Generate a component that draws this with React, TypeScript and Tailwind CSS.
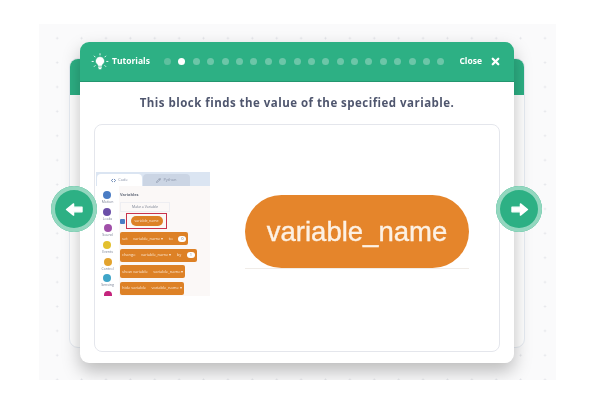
import { X, Code, Pencil } from 'lucide-react'

const categories = [
  { name: 'Motion', color: 'bg-[#4a7cc4]' },
  { name: 'Looks', color: 'bg-[#6b4fa8]' },
  { name: 'Sound', color: 'bg-[#a04fa8]' },
  { name: 'Events', color: 'bg-[#e3c02e]' },
  { name: 'Control', color: 'bg-[#e3a32e]' },
  { name: 'Sensing', color: 'bg-[#3fa5c8]' },
  { name: '', color: 'bg-[#c4237c]' },
]

const dots = Array.from({ length: 20 }, (_, i) => i)

function Block({ children }: { children: React.ReactNode }) {
  return (
    <div className="relative mb-[3.5px] flex h-[13px] w-fit items-center gap-[5.5px] rounded-[2px] bg-[#dd8126] px-[2px] text-[4px] text-[#fbe6d0]">
      {children}
    </div>
  )
}

function ScreenshotThumb() {
  return (
    <div className="flex h-[124px] w-[114px] shrink-0 flex-col overflow-hidden blur-[0.4px]">
      <div className="flex h-[14px] shrink-0 items-end bg-[#dbe5f2] pl-[1px]">
        <div className="flex h-[12px] w-[45px] items-center justify-center gap-[2px] rounded-t-[4px] bg-white text-[4px] text-[#8a93a8]">
          <Code className="h-[5px] w-[5px] text-[#4a6fa5]" strokeWidth={4} />
          Code
        </div>
        <div className="ml-[1px] flex h-[12px] w-[47px] items-center justify-center gap-[2px] rounded-t-[4px] bg-[#cbd5e4] text-[4px] text-[#8a93a8]">
          <Pencil className="h-[5px] w-[5px]" strokeWidth={3} />
          Python
        </div>
      </div>
      <div className="flex min-h-0 flex-1 bg-white">
        <div className="flex w-[23px] shrink-0 flex-col items-center gap-[3.7px] pt-[5px]">
          {categories.map(c => (
            <div key={c.color} className="flex h-[13px] flex-col items-center">
              <div className={`h-[8px] w-[8px] shrink-0 rounded-full ${c.color}`} />
              <span className="text-[3.5px] leading-[5px] text-[#7a8296]">{c.name}</span>
            </div>
          ))}
        </div>
        <div className="min-w-0 flex-1 bg-[#fbf8f7] pl-[1px] pt-[6px]">
          <p className="text-[4px] font-bold leading-[5px] text-[#6b7280]">Variables</p>
          <div className="mt-[5px] flex h-[10px] w-[50px] items-center justify-center border border-[#eeeef2] text-[3.5px] text-[#777f90]">
            Make a Variable
          </div>
          <div className="mb-[3px] mt-[1px] flex items-center">
            <div className="h-[5px] w-[5px] rounded-[1px] bg-[#4a7cc4]" />
            <div className="ml-[1px] flex h-[16px] w-[41px] items-center justify-center border border-[#c8324c]">
              <div className="flex h-[10px] w-[32px] items-center justify-center rounded-full bg-[#dd8126] text-[3.5px] text-[#fbe6d0]">
                variable_name
              </div>
            </div>
          </div>
          <Block>
            <span>set</span>
            <span>variable_name ▾</span>
            <span>to</span>
            <span className="rounded-full bg-white px-[3px] text-[#777]">0</span>
          </Block>
          <Block>
            <span>change</span>
            <span>variable_name ▾</span>
            <span>by</span>
            <span className="rounded-full bg-white px-[3px] text-[#777]">1</span>
          </Block>
          <Block>
            <span>show variable</span>
            <span>variable_name ▾</span>
          </Block>
          <Block>
            <span>hide variable</span>
            <span>variable_name ▾</span>
          </Block>
        </div>
      </div>
    </div>
  )
}

function TipBulb() {
  return (
    <svg viewBox="0 0 20 20" className="h-[18px] w-[18px] shrink-0" fill="none" stroke="white">
      <path d="M10 4.5a4.4 4.4 0 0 0-2.6 8c.6.5.8 1 .8 1.7h3.6c0-.7.2-1.2.8-1.7a4.4 4.4 0 0 0-2.6-8z" fill="white" strokeWidth="0.6" />
      <path d="M8.4 15.6h3.2M9 17.4h2" strokeWidth="1.3" strokeLinecap="round" />
      <path d="M10 0.8v1.4M3.6 3.4l1 1M16.4 3.4l-1 1M1.2 9.4h1.4M17.4 9.4h1.4M3.6 15l1-1M16.4 15l-1-1" strokeWidth="1" strokeLinecap="round" />
    </svg>
  )
}

function NavButton({ side }: { side: 'left' | 'right' }) {
  return (
    <button
      className={`absolute top-[162px] flex h-[46px] w-[46px] items-center justify-center rounded-full bg-[#2db084] shadow-[inset_0_0_0_4px_#93d7bf] ${
        side === 'left' ? 'left-[12px]' : 'left-[457px]'
      }`}
    >
      <svg viewBox="0 0 20 16" className={`h-[15px] w-[19px] ${side === 'right' ? 'rotate-180' : ''}`}>
        <path
          d="M1.5 8 L9 2 V5.5 H18 V10.5 H9 V14 Z"
          fill="white"
          stroke="white"
          strokeWidth="1.5"
          strokeLinejoin="round"
        />
      </svg>
    </button>
  )
}

export default function App() {
  return (
    <div className="h-[400px] w-[600px] overflow-hidden bg-white pl-[39px] pt-[24px] font-['Open_Sans',sans-serif]">
      <div className="relative h-[356px] w-[517px] overflow-hidden bg-[#fafafb] bg-[radial-gradient(circle,#e2e3e8_0.8px,transparent_1.2px)] bg-[size:24.4px_24.4px] bg-[position:6px_2px] pl-[41px] pt-[18px]">
        {/* card behind */}
        <div className="absolute left-[30px] top-[34px] h-[290px] w-[456px] overflow-hidden rounded-[9px] border border-[#e6ebf2] bg-white">
          <div className="h-[36px] bg-[#2db084]" />
        </div>

        {/* main card */}
        <div className="relative flex h-[321px] w-[434px] flex-col overflow-hidden rounded-[9px] bg-white shadow-[0_8px_18px_rgba(0,0,0,0.26)]">
          <div className="flex h-[40px] shrink-0 items-center border-b border-[#24966f] bg-[#2db084] pl-[11px] text-white">
            <TipBulb />
            <span className="ml-[3px] w-[52px] text-[8.5px] font-bold blur-[0.3px]">Tutorials</span>
            <div className="flex gap-[7.4px]">
              {dots.map(i => (
                <span
                  key={i}
                  className={`h-[7px] w-[7px] rounded-full ${
                    i === 1 ? 'bg-white' : i === 0 ? 'bg-[#5ec09f]' : 'bg-[#6cc6a8]'
                  }`}
                />
              ))}
            </div>
            <span className="ml-[15px] text-[8.5px] font-bold blur-[0.3px]">Close</span>
            <X className="ml-[8px] h-[11px] w-[11px]" strokeWidth={5} />
          </div>

          <div className="flex flex-1 flex-col px-[14px] pb-[11px] pt-[13px]">
            <h2 className="text-center text-[11.5px] font-bold leading-[16px] tracking-[0.47px] text-[#4f566e] blur-[0.3px]">
              This block finds the value of the specified variable.
            </h2>
            <div className="mt-[13px] flex flex-1 items-start rounded-[8px] border border-[#e4e6ec] bg-white pl-[1px] pr-[34px] pt-[47px]">
              <ScreenshotThumb />
              <div className="ml-[35px] mt-[23px] flex-1 border-b border-[#f0ece8]">
                <div className="flex h-[73px] w-[224px] items-center justify-center rounded-full bg-[#e5852b] font-['Liberation_Sans',sans-serif] text-[27.5px] text-[#fdf1e4] blur-[0.4px] [-webkit-text-stroke:0.4px_#fdf1e4]">
                  variable_name
                </div>
              </div>
            </div>
          </div>
        </div>

        <NavButton side="left" />
        <NavButton side="right" />
      </div>
    </div>
  )
}
